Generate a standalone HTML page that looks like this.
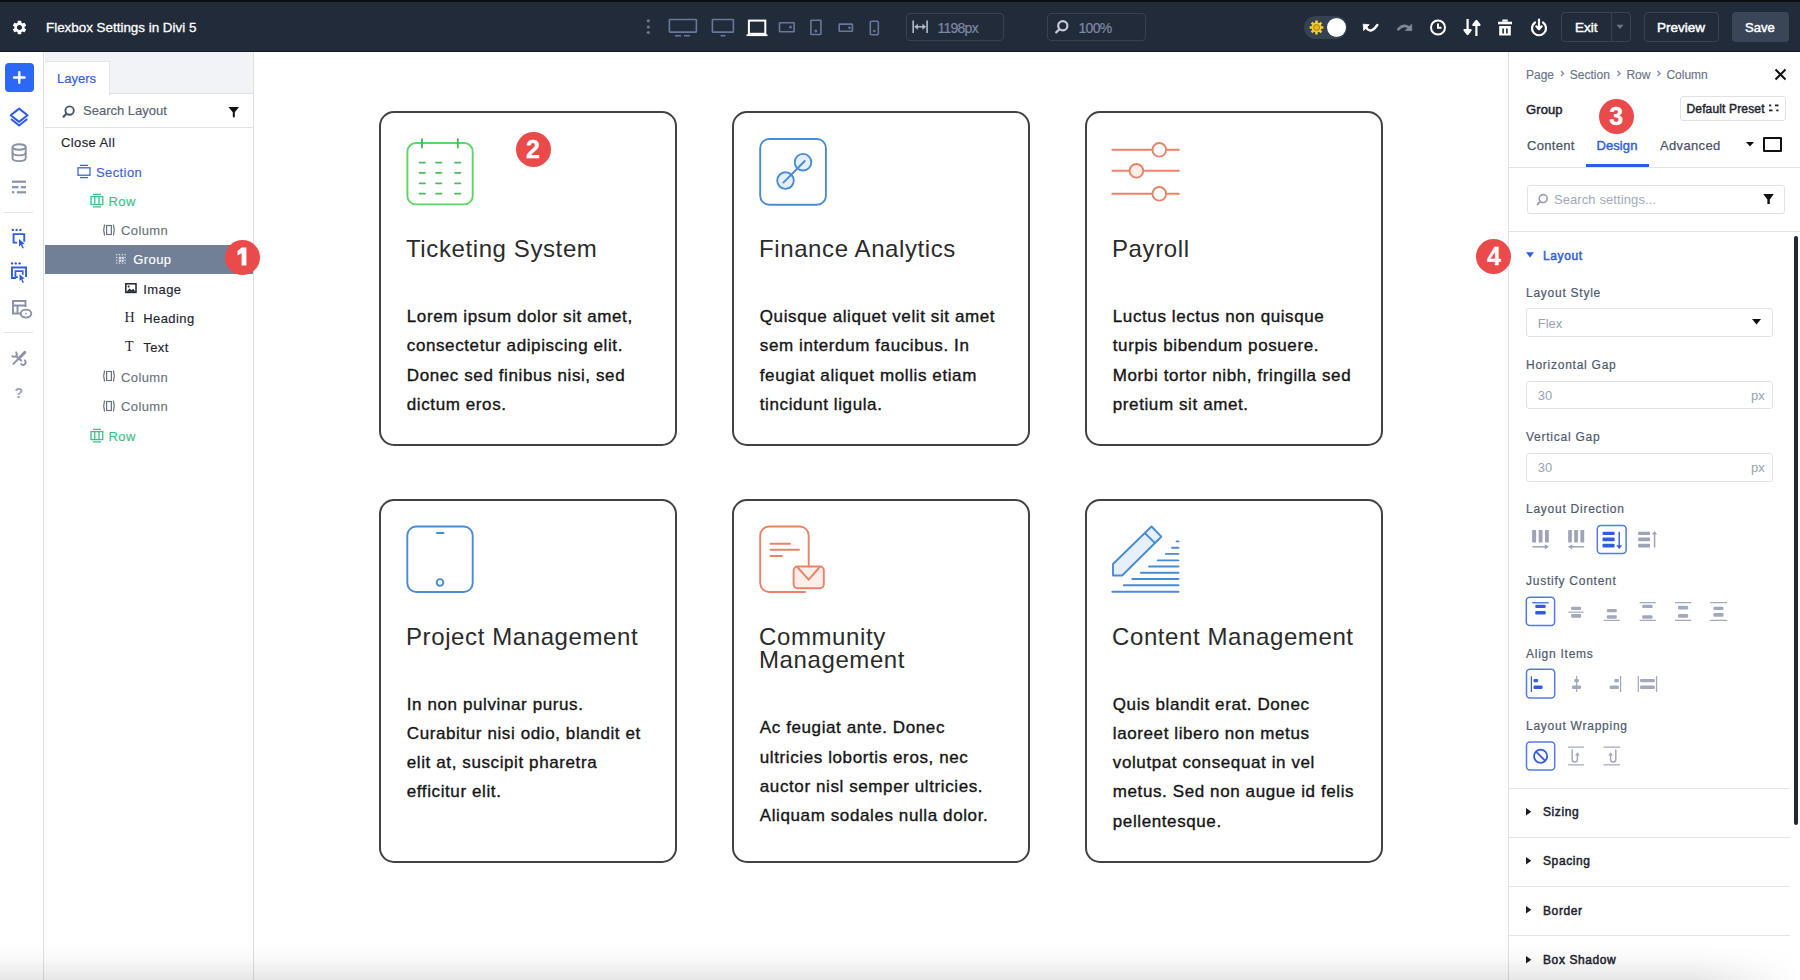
<!DOCTYPE html>
<html><head><meta charset="utf-8">
<style>
*{box-sizing:border-box;margin:0;padding:0}
html,body{width:1800px;height:980px;overflow:hidden;background:#fff;font-family:"Liberation Sans",sans-serif;position:relative}
.a{position:absolute}
svg{position:absolute;overflow:visible}
.t{position:absolute;white-space:nowrap;line-height:1}
/* top bar */
#top{left:0;top:0;width:1800px;height:52px;background:#222b39;border-top:2.6px solid #0c0e12;border-bottom:1px solid #141a24}
/* rails */
#rail{left:0;top:52px;width:44px;height:928px;background:#fff;border-right:1px solid #dcdfe4}
#layers{left:44px;top:52px;width:210px;height:928px;background:#fff;border-right:1px solid #dcdfe4}
#canvas{left:254px;top:52px;width:1254px;height:928px;background:#fff}
#panel{left:1508px;top:52px;width:292px;height:928px;background:#fff;border-left:1px solid #dcdfe4}
.card{position:absolute;width:298px;border:2px solid #424242;border-radius:15px;background:#fff}
.h{position:absolute;font-size:24px;color:#2b2b2b;letter-spacing:0.6px;white-space:nowrap;line-height:23px}
.b{position:absolute;font-size:17px;color:#151515;letter-spacing:0.6px;white-space:nowrap;line-height:29.3px;-webkit-text-stroke:0.35px #151515}
.badge{position:absolute;z-index:5;width:35px;height:35px;border-radius:50%;background:#eb4a4b;color:#fff;font-weight:700;font-size:25px;text-align:center;line-height:35px;-webkit-text-stroke:0.3px #fff}
.tree{position:absolute;font-size:13px;letter-spacing:0.4px;white-space:nowrap;line-height:1;-webkit-text-stroke:0.15px currentColor}
.lbl{position:absolute;font-size:12px;color:#505a6e;letter-spacing:0.75px;white-space:nowrap;line-height:1;-webkit-text-stroke:0.2px #505a6e}
.inp{position:absolute;left:1526px;width:247px;height:29px;border:1px solid #dfe2e7;border-radius:3px;background:#fff}
.acc{position:absolute;left:1543px;font-size:12px;color:#1f2430;letter-spacing:0.6px;white-space:nowrap;line-height:1;-webkit-text-stroke:0.5px #1f2430}
.sep{position:absolute;left:1509px;width:281px;height:1px;background:#e3e5e9}
</style></head><body>

<!-- TOP BAR -->
<div id="top" class="a"></div>
<!-- gear -->
<svg style="left:10.5px;top:19.3px" width="17" height="17" viewBox="0 0 24 24"><path fill="#fff" d="M19.14 12.94c.04-.3.06-.61.06-.94s-.02-.64-.07-.94l2.03-1.58a.49.49 0 0 0 .12-.61l-1.92-3.32a.49.49 0 0 0-.59-.22l-2.39.96c-.5-.38-1.03-.7-1.62-.94l-.36-2.54a.484.484 0 0 0-.48-.41h-3.84c-.24 0-.43.17-.47.41l-.36 2.54c-.59.24-1.13.57-1.62.94l-2.39-.96a.48.48 0 0 0-.59.22L2.74 8.87c-.12.21-.08.47.12.61l2.03 1.58c-.05.3-.09.63-.09.94s.02.64.07.94l-2.03 1.58a.49.49 0 0 0-.12.61l1.92 3.32c.12.22.37.29.59.22l2.39-.96c.5.38 1.03.7 1.62.94l.36 2.54c.05.24.24.41.48.41h3.84c.24 0 .44-.17.47-.41l.36-2.54c.59-.24 1.13-.56 1.62-.94l2.39.96c.22.08.47 0 .59-.22l1.92-3.32c.12-.22.07-.47-.12-.61l-2.01-1.58zM12 15.6c-1.98 0-3.6-1.62-3.6-3.6s1.62-3.6 3.6-3.6 3.6 1.62 3.6 3.6-1.62 3.6-3.6 3.6z"/></svg>
<div class="t" style="left:46px;top:20.8px;font-size:13.4px;color:#fff;-webkit-text-stroke:0.3px #fff">Flexbox Settings in Divi 5</div>
<!-- kebab -->
<svg style="left:644px;top:17px" width="8" height="20" viewBox="0 0 8 20"><circle cx="4.3" cy="3.8" r="1.6" fill="#6f7890"/><circle cx="4.3" cy="10" r="1.6" fill="#6f7890"/><circle cx="4.3" cy="15.5" r="1.6" fill="#6f7890"/></svg>
<!-- responsive icons -->
<svg style="left:660px;top:12px" width="230" height="30" viewBox="660 12 230 30" fill="none" stroke="#6a779d" stroke-width="1.6">
<rect x="669.4" y="19.5" width="27" height="12.6" rx="0.5"/>
<path d="M675 35.7h6M684 35.7h6" stroke-width="1.6"/>
<rect x="712.4" y="19.5" width="21" height="12.6" rx="0.5"/>
<path d="M720.5 35.7h5" stroke-width="1.6"/>
<rect x="748.9" y="20.6" width="16.4" height="13.2" stroke="#fff" stroke-width="2"/>
<path d="M746.5 35.2h21" stroke="#fff" stroke-width="1.8"/>
<rect x="779.5" y="22.7" width="14.6" height="9" rx="0.5"/>
<circle cx="790.5" cy="27.2" r="0.6" fill="#6b789e"/>
<rect x="810.9" y="20.3" width="10" height="14.2" rx="0.5"/>
<circle cx="815.9" cy="31" r="0.6" fill="#6b789e"/>
<rect x="839.2" y="24.1" width="13.2" height="7.2" rx="0.5"/>
<circle cx="849.5" cy="27.7" r="0.5" fill="#6b789e"/>
<rect x="870.3" y="21.3" width="8" height="13.5" rx="1"/>
<circle cx="874.3" cy="31" r="0.5" fill="#6b789e"/>
</svg>
<!-- width input -->
<div class="a" style="left:905.5px;top:12.9px;width:98px;height:28.5px;border:1px solid #38414f;border-radius:4px"></div>
<svg style="left:910px;top:18px" width="22" height="18" viewBox="0 0 22 18" fill="none" stroke="#b4bacb" stroke-width="1.6">
<path d="M3.2 2.5v12.5M17.1 2.5v12.5M5.5 8.8h9.5"/><path d="M4.6 8.8L7.6 6.3V11.3Z M15.7 8.8L12.7 6.3V11.3Z" fill="#b4bacb" stroke-width="0.6"/>
</svg>
<div class="t" style="left:937.5px;top:20.5px;font-size:14px;letter-spacing:-0.75px;color:#7e88a6;-webkit-text-stroke:0.2px #7e88a6">1198px</div>
<!-- zoom input -->
<div class="a" style="left:1046.5px;top:12.9px;width:99px;height:28.5px;border:1px solid #38414f;border-radius:4px"></div>
<svg style="left:1054px;top:19px" width="16" height="16" viewBox="0 0 16 16" fill="none" stroke="#c6cbd8" stroke-width="2.2">
<circle cx="8.8" cy="6.8" r="4.6"/><path d="M5.4 10.2L2.2 13.4" stroke-linecap="round"/>
</svg>
<div class="t" style="left:1078.5px;top:20.5px;font-size:14px;letter-spacing:-0.7px;color:#7e88a6;-webkit-text-stroke:0.2px #7e88a6">100%</div>
<!-- toggle -->
<div class="a" style="left:1304px;top:16px;width:43px;height:23px;border-radius:12px;background:#364152"></div>
<svg style="left:1308px;top:19px" width="17" height="17" viewBox="0 0 17 17">
<g stroke="#f3d02a" stroke-width="2.6" stroke-linecap="butt"><path d="M8.5 1.6v2.5M8.5 12.9v2.5M1.6 8.5h2.5M12.9 8.5h2.5M3.6 3.6l1.8 1.8M11.6 11.6l1.8 1.8M3.6 13.4l1.8-1.8M11.6 5.4l1.8-1.8"/></g>
<circle cx="8.5" cy="8.5" r="5" fill="#f3d02a"/><circle cx="8.5" cy="8.5" r="3" fill="#eab620" stroke="#9c7414" stroke-width="0.9"/>
</svg>
<div class="a" style="left:1326.7px;top:17.6px;width:19.5px;height:19.5px;border-radius:50%;background:#fff"></div>
<!-- undo -->
<svg style="left:1355px;top:14px" width="65" height="26" viewBox="1355 14 65 26">
<path d="M1363.2 24.2L1369.2 24.7L1363.7 30.6Z" fill="#fff" stroke="#fff" stroke-width="0.8" stroke-linejoin="round"/>
<path d="M1365.8 27Q1370.3 34.8 1377.3 25" fill="none" stroke="#fff" stroke-width="2.5" stroke-linecap="round"/>
<path d="M1398.2 29.3Q1403.5 23.5 1409 27.5" fill="none" stroke="#80889a" stroke-width="2.5" stroke-linecap="round"/>
<path d="M1411.6 24.3L1411.8 30.6L1405.3 30.4Z" fill="#80889a" stroke="#80889a" stroke-width="0.8" stroke-linejoin="round"/>
</svg>
<!-- clock -->
<svg style="left:1428px;top:18px" width="20" height="20" viewBox="0 0 20 20" fill="none" stroke="#fff" stroke-width="2">
<circle cx="10" cy="9.5" r="7"/><path d="M10 5.5v4.3h3.5"/>
</svg>
<!-- sort -->
<svg style="left:1462px;top:17px" width="20" height="21" viewBox="0 0 20 21" fill="none" stroke="#fff" stroke-width="2.2" stroke-linejoin="round">
<path d="M5.6 2v14"/><path d="M2.5 13L5.6 17L8.7 13Z" fill="#fff"/>
<path d="M14.4 19V5"/><path d="M11.3 8L14.4 4L17.5 8Z" fill="#fff"/>
</svg>
<!-- trash -->
<svg style="left:1496px;top:18px" width="18" height="19" viewBox="0 0 18 19" fill="#fff">
<rect x="6.3" y="1.5" width="5.4" height="2.2"/><rect x="2" y="3.7" width="14" height="2.6"/>
<path d="M3.2 8h11.6v9.5H3.2Z"/><rect x="6.3" y="10.5" width="1.6" height="5" fill="#222a36"/><rect x="10.1" y="10.5" width="1.6" height="5" fill="#222a36"/>
</svg>
<!-- power -->
<svg style="left:1529px;top:17px" width="20" height="21" viewBox="0 0 20 21" fill="none" stroke="#fff" stroke-width="2.2" stroke-linecap="round">
<path d="M6 5.5a7 7 0 1 0 8 0"/><path d="M10 2.5v9"/><path d="M7.3 9.3L10 12.3L12.7 9.3" stroke-linejoin="round"/>
</svg>
<!-- exit group -->
<div class="a" style="left:1561px;top:12px;width:70px;height:30px;border:1px solid #39424f;border-radius:4px"></div>
<div class="a" style="left:1611px;top:12px;width:1px;height:30px;background:#39424f"></div>
<div class="t" style="left:1575px;top:21px;font-size:13.5px;color:#fff;-webkit-text-stroke:0.45px #fff">Exit</div>
<svg style="left:1615px;top:24px" width="10" height="6" viewBox="0 0 10 6"><path d="M1.5 0.8h7L5 5Z" fill="#6c7585"/></svg>
<!-- preview -->
<div class="a" style="left:1643.5px;top:12px;width:75.5px;height:30px;border:1px solid #39424f;border-radius:4px"></div>
<div class="t" style="left:1657px;top:21px;font-size:13.5px;color:#fff;-webkit-text-stroke:0.45px #fff">Preview</div>
<!-- save -->
<div class="a" style="left:1732px;top:12px;width:56.5px;height:30px;border-radius:4px;background:#3a4658"></div>
<div class="t" style="left:1745px;top:21px;font-size:13px;color:#fff;-webkit-text-stroke:0.45px #fff">Save</div>


<!-- LEFT RAIL -->
<div id="rail" class="a"></div>
<div class="a" style="left:5px;top:63px;width:28.5px;height:29px;border-radius:4px;background:#2b68f5"></div>
<svg style="left:5px;top:63px" width="29" height="29" viewBox="0 0 29 29"><path d="M14.3 9.2v10.6M9 14.5h10.6" stroke="#fff" stroke-width="2.4" stroke-linecap="round"/></svg>
<!-- layers icon -->
<svg style="left:0;top:100px" width="40" height="40" viewBox="0 0 40 40" fill="none" stroke="#2e5ce6" stroke-width="2" stroke-linejoin="round">
<path d="M19.1 8.6L27.5 15.3L19.1 21.9L10.7 15.3Z"/><path d="M11 19L19.1 25.5L27.3 19"/>
</svg>
<!-- database -->
<svg style="left:0;top:140px" width="40" height="24" viewBox="0 0 40 24" fill="none" stroke="#8a92a6" stroke-width="1.9">
<ellipse cx="19.1" cy="7" rx="6.6" ry="2.8"/><path d="M12.5 7v11.3c0 1.6 3 2.8 6.6 2.8s6.6-1.2 6.6-2.8V7"/><path d="M12.5 12.6c0 1.6 3 2.8 6.6 2.8s6.6-1.2 6.6-2.8"/>
</svg>
<!-- layout -->
<svg style="left:0;top:176px" width="40" height="20" viewBox="0 0 40 20" fill="#8a92a6">
<rect x="12" y="4.6" width="14" height="2.2"/><rect x="12" y="10.1" width="6.5" height="2.2"/><rect x="20.8" y="10.1" width="5.2" height="2.2"/><rect x="12" y="15.2" width="2.4" height="2.2"/><rect x="16.8" y="15.2" width="9.2" height="2.2"/>
</svg>
<div class="a" style="left:4px;top:211.5px;width:29px;height:1px;background:#e1e3e8"></div>
<!-- select icon 1 -->
<svg style="left:0;top:220px" width="40" height="36" viewBox="0 0 40 36" fill="#2e5ce6">
<circle cx="12.8" cy="9.9" r="1.2"/><circle cx="16.6" cy="9.9" r="1.2"/><circle cx="20.4" cy="9.9" r="1.2"/>
<path d="M12.6 13.2h12.6v8.5h-1.9v-6.6h-8.8v6.6h2.6v1.9h-4.5Z"/>
<path d="M19 19L24.6 23.8L22.2 24.3L23.8 28L22.4 28.6L20.8 25L19 26.5Z"/>
</svg>
<!-- select icon 2 -->
<svg style="left:0;top:254px" width="40" height="36" viewBox="0 0 40 36" fill="#2e5ce6">
<circle cx="12" cy="9.4" r="1.2"/><circle cx="15.8" cy="9.4" r="1.2"/><circle cx="19.6" cy="9.4" r="1.2"/>
<path d="M11 12.6h16v10.5h-1.9v-8.6h-12.2v8.6h3.2v1.9h-5.1Z"/>
<path d="M14.6 16.3h9v4.5h-1.7v-2.8h-5.6v4.3h1.5v1.7h-3.2Z"/>
<path d="M19.5 20.2L24.6 24.6L22.4 25L23.9 28.4L22.6 29L21.1 25.6L19.5 27Z"/>
</svg>
<!-- template/eye -->
<svg style="left:0;top:296px" width="40" height="26" viewBox="0 0 40 26" fill="none" stroke="#8a92a6" stroke-width="1.9">
<path d="M21 17.5H13V5h12.5v6"/><path d="M13 9.5h12.5M17.5 9.5v8"/>
<ellipse cx="26" cy="17.6" rx="5.3" ry="4" fill="#fff"/><circle cx="26" cy="17.6" r="0.9" fill="#8a92a6" stroke="none"/>
</svg>
<div class="a" style="left:4px;top:332px;width:29px;height:1px;background:#e1e3e8"></div>
<!-- tools -->
<svg style="left:5px;top:345px" width="30" height="27" viewBox="5 345 30 27" fill="none" stroke="#8e95a9" stroke-linecap="round">
<path d="M24.8 352.4L20 357.3" stroke-width="3"/><path d="M20 357.3L13.4 363.9" stroke-width="2"/>
<path d="M16.1 356.1L21.2 360.5" stroke-width="2.2"/>
<path d="M16.1 352.4A2.6 2.6 0 1 1 12.4 356.1" stroke-width="2"/>
<path d="M24.9 360.4A2.6 2.6 0 1 1 21.2 364.1" stroke-width="2"/>
</svg>
<div class="t" style="left:14.5px;top:386px;font-size:14px;font-weight:700;color:#9aa1b3">?</div>


<!-- LAYERS PANEL -->
<div id="layers" class="a"></div>
<div class="a" style="left:45px;top:52px;width:208px;height:42px;background:#f2f3f6;border-bottom:1px solid #dde0e5"></div>
<div class="a" style="left:45px;top:61px;width:65px;height:34px;background:#fff;border:1px solid #e3e5ea;border-bottom:none;border-left:none;border-radius:0 2px 0 0"></div>
<div class="t" style="left:57px;top:72px;font-size:13px;color:#3560d6;-webkit-text-stroke:0.2px #3560d6">Layers</div>
<div class="a" style="left:45px;top:126.5px;width:208px;height:1px;background:#e1e3e8"></div>
<svg style="left:61px;top:104px" width="16" height="16" viewBox="0 0 16 16" fill="none" stroke="#4b5568" stroke-width="1.9">
<circle cx="8.6" cy="6.6" r="4.2"/><path d="M5.4 9.8L2.6 12.6" stroke-linecap="round" stroke-width="2.2"/>
</svg>
<div class="t" style="left:83px;top:104px;font-size:13px;color:#5b6273;-webkit-text-stroke:0.15px #5b6273">Search Layout</div>
<svg style="left:228px;top:106px" width="12" height="12" viewBox="0 0 12 12"><path d="M0.4 1.1h10.6L6.8 6.3V10.6a1 1 0 0 1 -2 0V6.3Z" fill="#111"/></svg>
<div class="tree" style="left:61px;top:135.5px;color:#1f2430">Close All</div>

<svg style="left:77px;top:164px" width="14" height="15" viewBox="0 0 14 15" fill="none" stroke="#3d63d8" stroke-width="1.3">
<rect x="1" y="3.8" width="12" height="7.4"/><path d="M3 1.4h8M3 13.6h8"/>
</svg>
<div class="tree" style="left:96px;top:165.5px;color:#3d63d8">Section</div>
<svg style="left:89.5px;top:193px" width="14" height="15" viewBox="0 0 14 15" fill="none" stroke="#3dbf8a" stroke-width="1.3">
<rect x="1" y="3.6" width="11.8" height="8"/><path d="M4.8 3.6v8M9 3.6v8M3 1.4h8M3 13.8h8"/>
</svg>
<div class="tree" style="left:108.5px;top:194.8px;color:#3dbf8a">Row</div>
<svg style="left:102px;top:223px" width="14" height="14" viewBox="0 0 14 14" fill="none" stroke="#6b7280" stroke-width="1.2">
<path d="M2.6 1.5Q0.8 7 2.6 12.5M11.4 1.5Q13.2 7 11.4 12.5"/><rect x="4.6" y="2.5" width="4.8" height="9"/>
</svg>
<div class="tree" style="left:121px;top:224px;color:#6b7280">Column</div>

<div class="a" style="left:45px;top:245.3px;width:208px;height:28.6px;background:#718096"></div>
<svg style="left:115px;top:253px" width="13" height="13" viewBox="0 0 13 13" fill="#e6e9ef">
<g opacity="0.9"><rect x="1" y="1" width="1.3" height="1.3"/><rect x="3.8" y="1" width="1.3" height="1.3"/><rect x="6.6" y="1" width="1.3" height="1.3"/><rect x="9.4" y="1" width="1.3" height="1.3"/>
<rect x="1" y="9.4" width="1.3" height="1.3"/><rect x="3.8" y="9.4" width="1.3" height="1.3"/><rect x="6.6" y="9.4" width="1.3" height="1.3"/><rect x="9.4" y="9.4" width="1.3" height="1.3"/>
<rect x="1" y="3.8" width="1.3" height="1.3"/><rect x="1" y="6.6" width="1.3" height="1.3"/><rect x="9.4" y="3.8" width="1.3" height="1.3"/><rect x="9.4" y="6.6" width="1.3" height="1.3"/>
<rect x="3.8" y="3.8" width="2.2" height="2.2"/><rect x="6.6" y="3.8" width="2.2" height="2.2"/><rect x="3.8" y="6.6" width="2.2" height="2.2"/><rect x="6.6" y="6.6" width="2.2" height="2.2"/></g>
</svg>
<div class="tree" style="left:133.3px;top:253px;color:#fff">Group</div>

<svg style="left:125px;top:283px" width="12" height="11" viewBox="0 0 12 11">
<rect x="0.8" y="0.8" width="10.2" height="8.6" fill="none" stroke="#1f2430" stroke-width="1.5"/><path d="M1.5 8.8L4.5 5.5L6.5 7.2L8.2 5.8L10.5 8.8Z" fill="#1f2430"/><circle cx="3.6" cy="3.5" r="1" fill="#1f2430"/>
</svg>
<div class="tree" style="left:143.3px;top:282.6px;color:#1f2430">Image</div>
<div class="t" style="left:124.5px;top:311px;font-size:14px;font-family:'Liberation Serif',serif;color:#1f2430">H</div>
<div class="tree" style="left:143.3px;top:312px;color:#1f2430">Heading</div>
<div class="t" style="left:125px;top:340px;font-size:14px;font-family:'Liberation Serif',serif;color:#1f2430">T</div>
<div class="tree" style="left:143.3px;top:340.7px;color:#1f2430">Text</div>

<svg style="left:102px;top:369px" width="14" height="14" viewBox="0 0 14 14" fill="none" stroke="#6b7280" stroke-width="1.2">
<path d="M2.6 1.5Q0.8 7 2.6 12.5M11.4 1.5Q13.2 7 11.4 12.5"/><rect x="4.6" y="2.5" width="4.8" height="9"/>
</svg>
<div class="tree" style="left:121px;top:370.5px;color:#6b7280">Column</div>
<svg style="left:102px;top:399px" width="14" height="14" viewBox="0 0 14 14" fill="none" stroke="#6b7280" stroke-width="1.2">
<path d="M2.6 1.5Q0.8 7 2.6 12.5M11.4 1.5Q13.2 7 11.4 12.5"/><rect x="4.6" y="2.5" width="4.8" height="9"/>
</svg>
<div class="tree" style="left:121px;top:400px;color:#6b7280">Column</div>
<svg style="left:89.5px;top:428px" width="14" height="15" viewBox="0 0 14 15" fill="none" stroke="#3dbf8a" stroke-width="1.3">
<rect x="1" y="3.6" width="11.8" height="8"/><path d="M4.8 3.6v8M9 3.6v8M3 1.4h8M3 13.8h8"/>
</svg>
<div class="tree" style="left:108.5px;top:429.5px;color:#3dbf8a">Row</div>
<div class="badge" style="left:224.8px;top:240px"></div><svg style="left:224.8px;top:240px;z-index:6" width="35" height="35" viewBox="0 0 35 35"><path d="M16.6 7.6H21.4V25.6H16.6V13.2L12.5 15.4V11Z" fill="#fff"/></svg>


<!-- CANVAS -->
<div id="canvas" class="a"></div>

<div class="card" style="left:379px;top:111px;height:335px"></div>
<div class="card" style="left:732px;top:111px;height:335px"></div>
<div class="card" style="left:1085px;top:111px;height:335px"></div>
<div class="card" style="left:379px;top:498.5px;height:364.5px"></div>
<div class="card" style="left:732px;top:498.5px;height:364.5px"></div>
<div class="card" style="left:1085px;top:498.5px;height:364.5px"></div>

<!-- icon 1 calendar -->
<svg style="left:400px;top:132px" width="80" height="80" viewBox="0 0 80 80" fill="none" stroke="#5ed568" stroke-width="1.9" stroke-linecap="round">
<rect x="7.4" y="11" width="65.3" height="61.4" rx="8.5"/>
<line x1="22" y1="7.2" x2="22" y2="15.5" stroke="#4db85c"/><line x1="57.8" y1="7.2" x2="57.8" y2="15.5" stroke="#4db85c"/>
<g stroke-width="1.7" stroke="#4fbb5e">
<path d="M19.5 30.6h5.5M36 30.6h5.5M55 30.6h5.5M19.5 40.8h5.5M36 40.8h5.5M55 40.8h5.5M19.5 51.3h5.5M36 51.3h5.5M55 51.3h5.5M19.5 61.7h5.5M36 61.7h5.5M55 61.7h5.5"/>
</g>
</svg>
<!-- icon 2 finance -->
<svg style="left:752px;top:132px" width="80" height="80" viewBox="0 0 80 80" fill="none" stroke="#4a8bd6" stroke-width="1.9" stroke-linecap="round">
<rect x="8.2" y="7" width="65.7" height="65.7" rx="9"/>
<circle cx="33.5" cy="48.6" r="8.3" fill="#e6f0fb"/>
<circle cx="51" cy="30.2" r="8.3" fill="#e6f0fb"/>
<line x1="31.4" y1="50.6" x2="52.7" y2="29"/>
</svg>
<!-- icon 3 payroll -->
<svg style="left:1105px;top:132px" width="80" height="80" viewBox="0 0 80 80" fill="none" stroke="#e8836a" stroke-width="1.9" stroke-linecap="round">
<path d="M7.3 17.8h66.6M7.3 38.8h66.6M7.3 61.8h66.6"/>
<circle cx="54.3" cy="17.8" r="6.8" fill="#fff"/>
<circle cx="31.4" cy="38.8" r="6.8" fill="#fbeee9"/>
<circle cx="54.3" cy="61.8" r="6.8" fill="#fff"/>
</svg>
<!-- icon 4 tablet -->
<svg style="left:400px;top:520px" width="80" height="80" viewBox="0 0 80 80" fill="none" stroke="#4a8bd6" stroke-width="1.9" stroke-linecap="round">
<rect x="7.3" y="6.5" width="65.4" height="65.5" rx="9"/>
<line x1="37" y1="13" x2="43.5" y2="13"/>
<circle cx="40" cy="62.4" r="3.3"/>
</svg>
<!-- icon 5 community -->
<svg style="left:752px;top:520px" width="80" height="80" viewBox="0 0 80 80" fill="none" stroke="#e8836a" stroke-width="1.9" stroke-linecap="round">
<path d="M53 72H17.2a9 9 0 0 1-9-9V15.5a9 9 0 0 1 9-9H47.7a9 9 0 0 1 9 9V46.5"/>
<path d="M18.5 23.7h19.5M18.5 29.8h28.5M18.5 36h11.5"/>
<rect x="41.6" y="46.5" width="30.2" height="21.7" rx="4" fill="#fbeee9"/>
<path d="M45.7 47.5L56.7 59.6L67.3 47.5"/>
</svg>
<!-- icon 6 content -->
<svg style="left:1105px;top:520px" width="80" height="80" viewBox="0 0 80 80" fill="none" stroke="#4a8bd6" stroke-width="1.9" stroke-linecap="round" stroke-linejoin="round">
<path d="M8 44L46.5 6.5L56.3 16.7L17.1 55.5H8Z" fill="#e6f0fb"/>
<line x1="40" y1="13.2" x2="49.8" y2="22.9"/>
<path d="M71.6 21.4h1.9M67 27.8h6.5M60.8 33.9h12.7M52.7 40.4h20.8M44 46.5h29.5M35.9 52.7h37.6M27.3 59h46.2M18.8 65.3h54.7M7.3 71.8h66.2"/>
</svg>

<div class="h" style="left:406px;top:237.2px">Ticketing System</div>
<div class="h" style="left:759px;top:237.2px">Finance Analytics</div>
<div class="h" style="left:1112px;top:237.2px">Payroll</div>
<div class="h" style="left:406px;top:624.5px">Project Management</div>
<div class="h" style="left:759px;top:624.5px">Community<br>Management</div>
<div class="h" style="left:1112px;top:624.5px">Content Management</div>

<div class="b" style="left:406.8px;top:302.2px">Lorem ipsum dolor sit amet,<br>consectetur adipiscing elit.<br>Donec sed finibus nisi, sed<br>dictum eros.</div>
<div class="b" style="left:759.8px;top:302.2px">Quisque aliquet velit sit amet<br>sem interdum faucibus. In<br>feugiat aliquet mollis etiam<br>tincidunt ligula.</div>
<div class="b" style="left:1112.8px;top:302.2px">Luctus lectus non quisque<br>turpis bibendum posuere.<br>Morbi tortor nibh, fringilla sed<br>pretium sit amet.</div>
<div class="b" style="left:406.8px;top:689.5px">In non pulvinar purus.<br>Curabitur nisi odio, blandit et<br>elit at, suscipit pharetra<br>efficitur elit.</div>
<div class="b" style="left:759.8px;top:713.3px">Ac feugiat ante. Donec<br>ultricies lobortis eros, nec<br>auctor nisl semper ultricies.<br>Aliquam sodales nulla dolor.</div>
<div class="b" style="left:1112.8px;top:689.5px">Quis blandit erat. Donec<br>laoreet libero non metus<br>volutpat consequat in vel<br>metus. Sed non augue id felis<br>pellentesque.</div>

<div class="badge" style="left:515.5px;top:131.5px">2</div>


<!-- RIGHT PANEL -->
<div id="panel" class="a"></div>
<div class="t" style="left:1526px;top:69px;font-size:12px;color:#6b7388;-webkit-text-stroke:0.15px #6b7388">Page</div>
<div class="t" style="left:1569.8px;top:69px;font-size:12px;color:#6b7388;-webkit-text-stroke:0.15px #6b7388">Section</div>
<div class="t" style="left:1626.4px;top:69px;font-size:12px;color:#6b7388;-webkit-text-stroke:0.15px #6b7388">Row</div>
<div class="t" style="left:1666.4px;top:69px;font-size:12px;color:#6b7388;-webkit-text-stroke:0.15px #6b7388">Column</div>
<svg style="left:1500px;top:60px" width="200" height="20" viewBox="1500 60 200 20" fill="none" stroke="#8b92a3" stroke-width="1.5">
<path d="M1561 71l2.5 2.5l-2.5 2.5M1617.5 71l2.5 2.5l-2.5 2.5M1657.5 71l2.5 2.5l-2.5 2.5"/>
</svg>
<svg style="left:1774px;top:68px" width="13" height="13" viewBox="0 0 13 13"><path d="M1.5 1.5l10 10M11.5 1.5l-10 10" stroke="#111" stroke-width="2"/></svg>
<div class="t" style="left:1526px;top:102.5px;font-size:13px;color:#1f2430;letter-spacing:0.1px;-webkit-text-stroke:0.5px #1f2430">Group</div>
<div class="a" style="left:1679.5px;top:95.5px;width:106px;height:25px;border:1px solid #dfe2e7;border-radius:3px"></div>
<div class="t" style="left:1686.5px;top:102.5px;font-size:12px;color:#1f2430;letter-spacing:0.15px;-webkit-text-stroke:0.45px #1f2430">Default Preset</div>
<svg style="left:1768px;top:103px" width="12" height="10" viewBox="0 0 12 10" fill="#1f2430"><rect x="1" y="1.5" width="2.2" height="1.8"/><rect x="7" y="1.5" width="3.5" height="1.8"/><rect x="1" y="6.5" width="3.5" height="1.8"/><rect x="8.3" y="6.5" width="2.2" height="1.8"/></svg>
<div class="badge" style="left:1598.8px;top:99px">3</div>
<div class="t" style="left:1527px;top:139px;font-size:13px;color:#4b5568;letter-spacing:0.3px;-webkit-text-stroke:0.25px #4b5568">Content</div>
<div class="t" style="left:1596.4px;top:139px;font-size:13px;color:#3560d6;letter-spacing:0.1px;-webkit-text-stroke:0.45px #3560d6">Design</div>
<div class="t" style="left:1660px;top:139px;font-size:13px;color:#4b5568;letter-spacing:0.35px;-webkit-text-stroke:0.25px #4b5568">Advanced</div>
<svg style="left:1745px;top:141px" width="10" height="7" viewBox="0 0 10 7"><path d="M1 1h8L5 5.5Z" fill="#111"/></svg>
<div class="a" style="left:1763px;top:137px;width:18.5px;height:15px;border:2px solid #111;border-radius:1px"></div>
<div class="a" style="left:1509px;top:166.5px;width:291px;height:1px;background:#e1e3e8"></div>
<div class="a" style="left:1586px;top:164px;width:63px;height:3px;background:#2e5ce6"></div>
<div class="a" style="left:1526.5px;top:184.5px;width:258.5px;height:29px;border:1px solid #dfe2e7;border-radius:3px"></div>
<svg style="left:1535px;top:192px" width="15" height="15" viewBox="0 0 15 15" fill="none" stroke="#9aa1b3" stroke-width="1.7">
<circle cx="8.2" cy="6.6" r="4"/><path d="M5.2 9.6L2.6 12.2" stroke-linecap="round" stroke-width="2"/>
</svg>
<div class="t" style="left:1553.9px;top:193px;font-size:13px;color:#a3a9b8;letter-spacing:0.1px">Search settings...</div>
<svg style="left:1762px;top:193px" width="13" height="12" viewBox="0 0 13 12"><path d="M1.2 1h10.6L7.8 6.5V11H5.4V6.5Z" fill="#111"/></svg>
<div class="a" style="left:1509px;top:230.5px;width:291px;height:1px;background:#e1e3e8"></div>
<div class="a" style="left:1794px;top:236px;width:4px;height:589px;border-radius:2px;background:#1f2735"></div>

<div class="badge" style="left:1476.4px;top:239.2px">4</div>
<svg style="left:1525px;top:250.5px" width="10" height="8" viewBox="0 0 10 8"><path d="M1 1.2h8L5 6.5Z" fill="#2e5ce6"/></svg>
<div class="t" style="left:1543px;top:249.6px;font-size:12px;color:#3560d6;letter-spacing:0.6px;-webkit-text-stroke:0.5px #3560d6">Layout</div>
<div class="lbl" style="left:1526px;top:286.8px">Layout Style</div>
<div class="inp" style="top:308px;height:29px"></div>
<div class="t" style="left:1537.7px;top:316.6px;font-size:13px;color:#9aa1b3">Flex</div>
<svg style="left:1751px;top:318px" width="11" height="8" viewBox="0 0 11 8"><path d="M1 1h9L5.5 6.5Z" fill="#111"/></svg>
<div class="lbl" style="left:1526px;top:359.1px">Horizontal Gap</div>
<div class="inp" style="top:380.5px;height:28.5px"></div>
<div class="t" style="left:1537.7px;top:388.8px;font-size:13px;color:#9aa1b3">30</div>
<div class="t" style="left:1751px;top:388.8px;font-size:13px;color:#9aa1b3">px</div>
<div class="lbl" style="left:1526px;top:430.9px">Vertical Gap</div>
<div class="inp" style="top:452.5px;height:29px"></div>
<div class="t" style="left:1537.7px;top:460.8px;font-size:13px;color:#9aa1b3">30</div>
<div class="t" style="left:1751px;top:460.8px;font-size:13px;color:#9aa1b3">px</div>

<div class="lbl" style="left:1526px;top:503.4px">Layout Direction</div>
<div class="lbl" style="left:1526px;top:575.4px">Justify Content</div>
<div class="lbl" style="left:1526px;top:647.9px">Align Items</div>
<div class="lbl" style="left:1526px;top:720px">Layout Wrapping</div>
<svg style="left:1520px;top:520px" width="220" height="256" viewBox="1520 520 220 256">
<g fill="#9ea3b8">
<rect x="1532.1" y="530" width="4" height="12.5" rx="0.6"/><rect x="1538.7" y="530" width="3.8" height="12.5" rx="0.6"/><rect x="1545" y="530" width="3.8" height="12.5" rx="0.6"/>
<rect x="1568.2" y="530" width="3.6" height="12.5" rx="0.6"/><rect x="1574.2" y="530" width="3.7" height="12.5" rx="0.6"/><rect x="1580.4" y="530" width="3.8" height="12.5" rx="0.6"/>
<rect x="1638.2" y="531.7" width="11.8" height="3.4" rx="0.6"/><rect x="1638.2" y="537.5" width="11.8" height="3.7" rx="0.6"/><rect x="1638.2" y="543.7" width="11.8" height="3.8" rx="0.6"/>
</g>
<g stroke="#9ea3b8" stroke-width="1.5" fill="none">
<path d="M1532.5 546.8H1546.5"/><path d="M1568.8 546.8H1584.2"/><path d="M1654.6 533.5V547.5"/>
</g>
<g fill="#9ea3b8">
<path d="M1544.8 544.2L1548.8 546.8L1544.8 549.6Z"/><path d="M1572.2 544.2L1568.2 546.8L1572.2 549.6Z"/><path d="M1652 534.5L1654.6 531L1657.2 534.5Z"/>
</g>
<rect x="1597.3" y="525.4" width="28.8" height="28.2" rx="3.5" fill="none" stroke="#5479e2" stroke-width="1.5"/>
<g fill="#2e5ce6">
<rect x="1602.5" y="531.7" width="12.1" height="3.4" rx="1"/><rect x="1602.5" y="537.5" width="12.1" height="3.7" rx="1"/><rect x="1602.5" y="543.7" width="12.1" height="3.8" rx="1"/>
<path d="M1616.2 545.2L1619.2 549L1622.2 545.2Z"/>
</g>
<path d="M1619.2 531.7V546" stroke="#2e5ce6" stroke-width="1.4"/>

<!-- justify -->
<rect x="1526.3" y="597.3" width="28.3" height="28.1" rx="3.5" fill="none" stroke="#5479e2" stroke-width="1.5"/>
<path d="M1532.2 602.8H1548.7" stroke="#2e5ce6" stroke-width="1.2"/>
<g fill="#2e5ce6"><rect x="1535.3" y="604.8" width="10.4" height="3.1" rx="1.2"/><rect x="1535.3" y="611" width="10.4" height="3.6" rx="1.2"/></g>
<g stroke="#a3a8bd" stroke-width="1.2">
<path d="M1568.3 612.2H1583.6"/><path d="M1603.7 620.4H1619.6"/>
<path d="M1639.6 602.6H1655.7M1639.6 620.4H1655.7"/><path d="M1675 602.6H1691.1M1675 620.4H1691.1"/><path d="M1710.1 602.6H1727.2M1710.1 620.4H1727.2"/>
</g>
<g fill="#a3a8bd">
<rect x="1571.1" y="606.7" width="10" height="3.4" rx="1.2"/><rect x="1571.1" y="614" width="10" height="3.7" rx="1.2"/>
<rect x="1606.8" y="608.9" width="10" height="3.3" rx="1.2"/><rect x="1606.8" y="615.2" width="10" height="3.5" rx="1.2"/>
<rect x="1642.2" y="604.8" width="10.4" height="3.3" rx="1.2"/><rect x="1642.2" y="615.2" width="10.4" height="3.5" rx="1.2"/>
<rect x="1678" y="605.7" width="10.1" height="3.7" rx="1.2"/><rect x="1678" y="614" width="10.1" height="3.7" rx="1.2"/>
<rect x="1713.4" y="606.7" width="10.1" height="3.4" rx="1.2"/><rect x="1713.4" y="613" width="10.1" height="3.7" rx="1.2"/>
</g>

<!-- align -->
<rect x="1526.5" y="669.3" width="28.2" height="28.8" rx="3.5" fill="none" stroke="#5479e2" stroke-width="1.5"/>
<path d="M1531.4 676.3V692" stroke="#2e5ce6" stroke-width="1.2"/>
<g fill="#2e5ce6"><rect x="1533.5" y="678.9" width="4.6" height="3.4" rx="1.2"/><rect x="1533.5" y="685.5" width="9.1" height="3.4" rx="1.2"/></g>
<g stroke="#a3a8bd" stroke-width="1.2"><path d="M1576.6 676V692M1620.6 676V692M1638.3 676V692M1656.6 676V692"/></g>
<g fill="#a3a8bd">
<rect x="1574.3" y="678.9" width="4.6" height="3.4" rx="1.2"/><rect x="1572" y="685.5" width="9.1" height="3.4" rx="1.2"/>
<rect x="1614.3" y="678.9" width="4.6" height="3.4" rx="1.2"/><rect x="1609.7" y="685.5" width="9.2" height="3.4" rx="1.2"/>
<rect x="1640" y="678.9" width="14.9" height="3.4" rx="1.2"/><rect x="1640" y="685.5" width="14.9" height="3.4" rx="1.2"/>
</g>

<!-- wrap -->
<rect x="1526.5" y="741.9" width="28.2" height="28.2" rx="3.5" fill="none" stroke="#5479e2" stroke-width="1.5"/>
<circle cx="1540.6" cy="756.2" r="6.6" fill="none" stroke="#2e5ce6" stroke-width="1.8"/>
<path d="M1536 751.6L1545.2 760.8" stroke="#2e5ce6" stroke-width="1.8"/>
<g stroke="#a3a8bd" stroke-width="1.2" fill="none">
<path d="M1568 747.2H1584M1568 764.9H1584"/><path d="M1603.4 747.2H1620M1603.4 764.9H1620"/>
</g>
<g stroke="#a3a8bd" stroke-width="1.5" fill="none">
<path d="M1572.2 749.5V759.5a2.6 2.6 0 0 0 5.2 0V754.6"/>
<path d="M1615.8 749.5V759.5a2.6 2.6 0 0 1 -5.2 0V754.6"/>
</g>
<g fill="#a3a8bd"><path d="M1574.9 755.6L1577.4 752.2L1579.9 755.6Z"/><path d="M1608.1 755.6L1610.6 752.2L1613.1 755.6Z"/></g>
</svg>


<div class="sep" style="top:788px"></div>
<div class="sep" style="top:837px"></div>
<div class="sep" style="top:886px"></div>
<div class="sep" style="top:935px"></div>
<svg style="left:1526px;top:808px" width="6" height="8" viewBox="0 0 6 8"><path d="M0 0V7.4L5.3 3.7Z" fill="#1a1d24"/></svg>
<div class="acc" style="top:806.4px">Sizing</div>
<svg style="left:1526px;top:857px" width="6" height="8" viewBox="0 0 6 8"><path d="M0 0V7.4L5.3 3.7Z" fill="#1a1d24"/></svg>
<div class="acc" style="top:855.4px">Spacing</div>
<svg style="left:1526px;top:906.4px" width="6" height="8" viewBox="0 0 6 8"><path d="M0 0V7.4L5.3 3.7Z" fill="#1a1d24"/></svg>
<div class="acc" style="top:904.8px">Border</div>
<svg style="left:1526px;top:955.6px" width="6" height="8" viewBox="0 0 6 8"><path d="M0 0V7.4L5.3 3.7Z" fill="#1a1d24"/></svg>
<div class="acc" style="top:953.8px">Box Shadow</div>


<div class="a" style="left:0;top:944px;width:1800px;height:36px;z-index:10;background:linear-gradient(to bottom,rgba(0,0,0,0),rgba(0,0,0,0.025) 40%,rgba(0,0,0,0.095));-webkit-mask-image:linear-gradient(to right,#000 0,#000 94%,transparent 100%)"></div>
</body></html>
